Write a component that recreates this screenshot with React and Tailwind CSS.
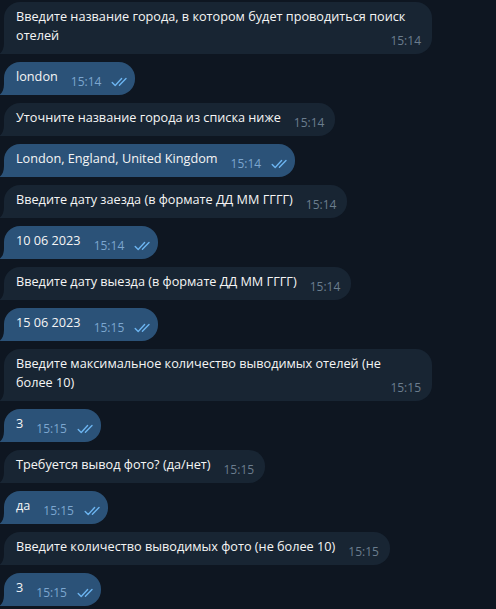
import React from "react"

const messages = [
  { out: false, text: "Введите название города, в котором будет проводиться поиск отелей", time: "15:14", multi: true },
  { out: true, text: "london", time: "15:14" },
  { out: false, text: "Уточните название города из списка ниже", time: "15:14" },
  { out: true, text: "London, England, United Kingdom", time: "15:14" },
  { out: false, text: "Введите дату заезда (в формате ДД ММ ГГГГ)", time: "15:14" },
  { out: true, text: "10 06 2023", time: "15:14" },
  { out: false, text: "Введите дату выезда (в формате ДД ММ ГГГГ)", time: "15:14" },
  { out: true, text: "15 06 2023", time: "15:15" },
  { out: false, text: "Введите максимальное количество выводимых отелей (не более 10)", time: "15:15", multi: true },
  { out: true, text: "3", time: "15:15" },
  { out: false, text: "Требуется вывод фото? (да/нет)", time: "15:15" },
  { out: true, text: "да", time: "15:15" },
  { out: false, text: "Введите количество выводимых фото (не более 10)", time: "15:15" },
  { out: true, text: "3", time: "15:15" },
]

function DoubleCheck() {
  return (
    <svg width="16" height="10" viewBox="0 0 16 10" fill="none" className="block">
      <path d="M1.2 5.4 L4.2 8.4 L10.6 1.6" stroke="#6cb4f0" strokeWidth="1.4" strokeLinecap="round" strokeLinejoin="round" />
      <path d="M8.4 8.2 L15 1.6" stroke="#6cb4f0" strokeWidth="1.4" strokeLinecap="round" />
    </svg>
  )
}

function Tail({ color }) {
  return (
    <svg width="5" height="11" viewBox="0 0 5 11" className="absolute -left-[5px] bottom-0">
      <path d="M5 0 C5 6 3 9.5 0 11 L5 11 Z" fill={color} />
    </svg>
  )
}

function Meta({ out, time }) {
  return (
    <span className="inline-flex items-center mt-[7px]">
      <span className={`text-[12px] leading-[16px] ${out ? "text-[#7ca6cf]" : "text-[#6b7d8e]"}`}>
        {time}
      </span>
      {out && (
        <span className="ml-[10px]">
          <DoubleCheck />
        </span>
      )}
    </span>
  )
}

function Bubble({ out, text, time, multi }) {
  const bg = out ? "#2b5278" : "#182533"
  return (
    <div className="pl-[4px]">
      <div
        className={`relative rounded-[16px] rounded-bl-none pl-3 pt-[5px] pb-[5px] ${multi ? "w-[428px]" : "w-fit"} ${out ? "bg-[#2b5278] pr-[8px]" : "bg-[#182533] pr-[11px]"}`}
      >
        <Tail color={bg} />
        {multi ? (
          <p className="flow-root pr-[12px] text-[12.7px] leading-[19px] text-[#f5f5f5]">
            {text}
            <span className="float-right -mr-[12px] flex">
              <Meta out={out} time={time} />
            </span>
          </p>
        ) : (
          <div className="flex items-start">
            <span className="text-[12.7px] leading-[19px] text-[#f5f5f5] whitespace-nowrap">{text}</span>
            <span className="ml-[13px] flex">
              <Meta out={out} time={time} />
            </span>
          </div>
        )}
      </div>
    </div>
  )
}

export default function App() {
  return (
    <div className="w-[496px] h-[609px] overflow-hidden bg-[#0e1621] pt-[2px] font-['Open_Sans',sans-serif]">
      <div className="flex flex-col gap-[8px]">
        {messages.map((m, i) => (
          <Bubble key={i} {...m} />
        ))}
      </div>
    </div>
  )
}
